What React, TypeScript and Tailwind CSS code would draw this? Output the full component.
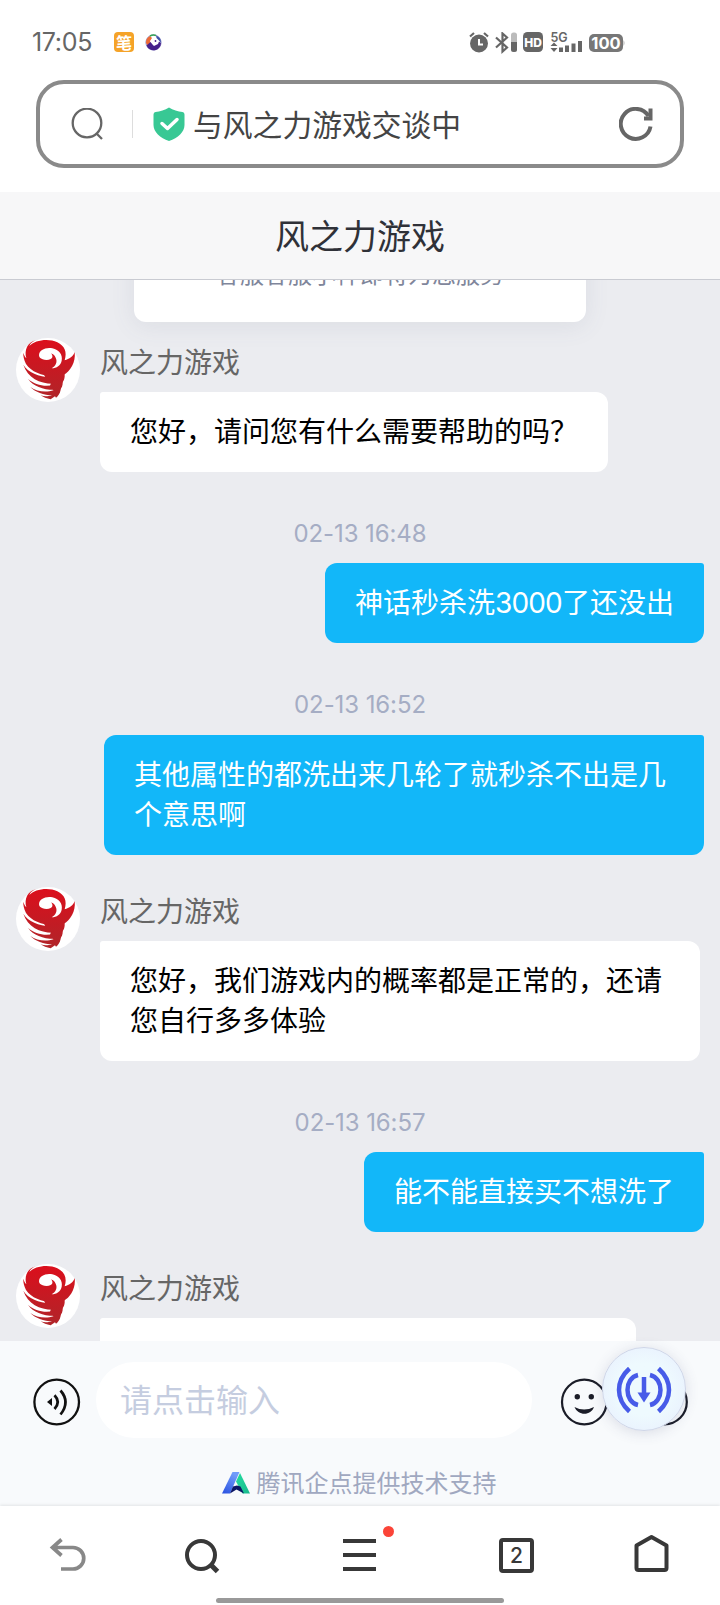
import React from "react";

const SANS = "font-['Noto_Sans_CJK_SC',sans-serif]";

function Avatar() {
  return (
    <svg className="size-16 shrink-0" viewBox="6 6 192 192">
      <defs>
        <linearGradient id="tornado" gradientUnits="userSpaceOnUse" x1="100" y1="10" x2="100" y2="190">
          <stop offset="0" stopColor="#dc0e1c" />
          <stop offset="1" stopColor="#b02529" />
        </linearGradient>
      </defs>
      <circle cx="102" cy="102" r="96" fill="#fff" />
      <g fill="url(#tornado)">
        <path d="M68 12C56 16 49 22 46 30C62 12 104 6 130 19C152 30 160 48 152 73C166 69 178 61 182 48C186 80 168 106 150 116C104 127 56 114 36 84C30 71 27 60 28 50C30 58 33 63 37 67C30 42 40 18 68 12Z" />
        <path d="M28 86C42 110 78 124 112 123L152 114C153 126 150 134 145 139C100 151 44 136 28 86Z" />
        <path d="M42 128C62 148 96 153 120 146L146 136C147 149 143 157 138 160C100 165 60 155 42 128Z" />
        <path d="M49 153C68 168 98 170 118 163L141 154C140 168 136 174 131 177C98 181 66 171 49 153Z" />
        <path d="M80 178C96 184 110 182 138 166C136 176 131 182 126 185L123 181L110 190C98 188 88 184 80 178Z" />
        <path d="M86 108L151 108L146 137L138 160L130 178L108 150L112 137L96 128Z" />
      </g>
      <path
        fill="#fff"
        d="M75 58C75 42 95 33 115 37C135 41 147 57 143 74C140 89 128 96 113 97C126 89 131 77 125 65C122 58 117 54 111 52C117 59 117 66 110 69C103 73 92 72 86 70C79 68 75 64 75 58Z"
      />
    </svg>
  );
}

type IncomingProps = { children?: React.ReactNode; className?: string };

function Incoming({ children, className = "" }: IncomingProps) {
  return (
    <div className={`flex shrink-0 items-start gap-5 pl-4 ${className}`}>
      <Avatar />
      <div className="flex flex-col items-start">
        <div className="flex h-[54px] items-start pt-[3px] text-[28px] leading-10 text-[#666]">风之力游戏</div>
        <div className="min-h-20 max-w-[600px] rounded-[12px] rounded-tl-[3px] bg-white px-[30px] pt-[18px] pb-[22px] text-[28px] leading-10 text-black">
          {children}
        </div>
      </div>
    </div>
  );
}

function Outgoing({ children }: { children: React.ReactNode }) {
  return (
    <div className="flex shrink-0 justify-end pr-4">
      <div className="max-w-[600px] rounded-[12px] rounded-tr-[3px] bg-[#12b7f9] px-[30px] pt-[18px] pb-[22px] text-[28px] leading-10 text-white">
        {children}
      </div>
    </div>
  );
}

function Time({ children, className }: { children: string; className: string }) {
  return (
    <div className={`mt-8 flex shrink-0 items-center justify-center font-['Inter'] text-[24px] tracking-[-0.1px] text-[#a5adc4] ${className}`}>
      {children}
    </div>
  );
}

function StatusBar() {
  return (
    <div className="flex h-20 shrink-0 items-start pt-8 pl-8">
      <div className="flex h-[22px] w-[82px] items-center font-['Inter'] text-[25px] tracking-[-0.3px] text-[#666]">17:05</div>
      <div className="flex size-5 items-center justify-center rounded-[4px] bg-[#f5a328] text-[16px] leading-5 font-bold text-white">笔</div>
      <svg className="mt-[2px] ml-[11px] size-[17px]" viewBox="0 0 17 17">
        <circle cx="8.5" cy="8.5" r="7.6" fill="#fff" stroke="#8a86c4" strokeWidth="1" />
        <path d="M1 9A7.500 7.500 0 0 1 5 2L7 4L5 7L5.500 9L3 12Z" fill="#ed6a35" />
        <path d="M5 2A7.500 7.500 0 0 1 11 1.500" stroke="#35a557" strokeWidth="1.600" fill="none" />
        <path d="M1.500 11.500L5.500 8L7.500 10.500L9 12L13 10L14 7.500L16 9A7.500 7.500 0 0 1 1.500 11.500Z" fill="#46208b" />
        <path d="M11 1.500A7.500 7.500 0 0 1 16 9L14 6.500L11.500 4Z" fill="#3c50a8" />
        <circle cx="10.500" cy="7" r="0.900" fill="#46208b" />
      </svg>
      <svg className="ml-[307px] h-[22px] w-[157px]" viewBox="0 0 157 22" fill="#666">
        <circle cx="10" cy="11.500" r="9" />
        <path d="M1 4.500L5 1M15 1L19 4.500" stroke="#666" strokeWidth="2.200" />
        <path d="M10 7V12.500H14" stroke="#fff" strokeWidth="2" fill="none" />
        <path d="M27 5.500L38 15.500L33.500 19.500V1.500L38 5.500L27 15.500" stroke="#666" strokeWidth="2.200" fill="none" />
        <rect x="42" y="0.500" width="6" height="19.500" rx="2.500" fill="#bbb" />
        <path d="M42 10H48V17.500Q48 20 45 20T42 17.500Z" />
        <rect x="54" y="0" width="20" height="20" rx="4.500" />
        <text x="64" y="14.500" textAnchor="middle" fill="#fff" className="font-['Inter'] text-[12px] font-extrabold">HD</text>
        <text x="81.500" y="9.800" className="font-['Inter'] text-[12.500px] font-semibold">5G</text>
        <path d="M85 10.500L88.500 14H81.500ZM85 20L81.500 16H88.500Z" />
        <path d="M90 15.500h4v4.500h-4zM96 13.500h4v6.500h-4zM102.500 11.500h4v8.500h-4zM109 9h4v11h-4z" />
        <rect x="120" y="2" width="34" height="18" rx="5" fill="#777" />
        <path d="M154.500 8Q156.500 11 154.500 14Z" fill="#aaa" />
        <text x="137" y="17" textAnchor="middle" fill="#fff" className="font-['Inter'] text-[16.500px] font-bold">100</text>
      </svg>
    </div>
  );
}

function AddressBar() {
  return (
    <div className="mx-9 flex h-22 shrink-0 items-center rounded-[28px] border-4 border-[#8a8a8a] bg-white pl-[31px]">
      <svg className="size-8 shrink-0" viewBox="0 0 32 32" fill="none" stroke="#666" strokeWidth="2.300">
        <circle cx="16" cy="15" r="14.300" />
        <path d="M25.500 25.500L31 31" />
      </svg>
      <div className="ml-[29px] h-7 w-px bg-[#ddd]" />
      <svg className="ml-5 h-[34px] w-[32px] shrink-0" viewBox="0 0 32 34">
        <path d="M16 0.500C20 3 25 4.500 29.500 5Q31.500 5.300 31.500 7.500V18C31.500 25 25 31 16 34C7 31 0.500 25 0.500 18V7.500Q0.500 5.300 2.500 5C7 4.500 12 3 16 0.500Z" fill="#38c894" />
        <path d="M9 16.500L14.500 21.500L24 12.500" fill="none" stroke="#fff" strokeWidth="3.500" strokeLinecap="round" strokeLinejoin="round" />
      </svg>
      <div className="ml-2 pb-[2px] text-[29.800px] leading-10 text-[#444]">与风之力游戏交谈中</div>
      <svg className="mr-[27px] ml-auto size-[34px]" viewBox="0 0 34 34" fill="none" stroke="#666" strokeWidth="4">
        <path d="M31.500 19.500A15 15 0 1 1 29.500 9" />
        <path d="M31.500 1.500V11.500H25" />
      </svg>
    </div>
  );
}

function InputArea() {
  return (
    <div className="relative z-10 flex h-[165px] shrink-0 flex-col bg-[#f8fafc]">
      <div className="flex h-[97px] items-start pt-[21px] pl-[33px]">
        <svg className="mt-4 size-12" viewBox="0 0 48 48" fill="none" stroke="#111" strokeWidth="2.300">
          <circle cx="23.700" cy="24" r="22.300" />
          <path d="M14 24L19 20V28Z" fill="#111" stroke="none" />
          <path d="M21.500 17.300Q28 24 21.500 31M27.500 12.500Q37.500 24 27.500 36.500" strokeWidth="2.700" />
        </svg>
        <div className="ml-[15px] flex h-19 w-[436px] items-center rounded-full bg-white pb-1 pl-6 text-[32px] leading-10 text-[#c5cde0]">请点击输入</div>
        <svg className="mt-4 ml-7 size-12" viewBox="0 0 48 48" fill="none" stroke="#1b1d28" strokeWidth="2.200">
          <circle cx="24.300" cy="24" r="22.300" />
          <circle cx="17.300" cy="18.700" r="2.700" fill="#1b1d28" stroke="none" />
          <circle cx="31.300" cy="18.700" r="2.700" fill="#1b1d28" stroke="none" />
          <path d="M14.500 29Q24 34 34 29C31 38 18 38 14.500 29Z" fill="#1b1d28" stroke="none" />
        </svg>
        <svg className="mt-4 ml-8 size-12" viewBox="0 0 48 48" fill="none" stroke="#1b1d28" strokeWidth="2.200">
          <circle cx="24.500" cy="24" r="22.300" />
        </svg>
      </div>
      <div className="flex items-center justify-center pt-[26px] pr-[2px] text-[24px] leading-9 text-[#a0a8c0]">
        <svg className="mt-[2px] mr-[7px] h-[22px] w-7" viewBox="0 0 28 22">
          <defs>
            <linearGradient id="qdBlue" x1="0" y1="1" x2=".5" y2="0">
              <stop offset="0" stopColor="#2850e0" />
              <stop offset="1" stopColor="#719cfa" />
            </linearGradient>
            <linearGradient id="qdGreen" x1="0" y1="0" x2="1" y2="1">
              <stop offset="0" stopColor="#24dca0" />
              <stop offset="1" stopColor="#18b98c" />
            </linearGradient>
          </defs>
          <path d="M10.500 0H17.500L8 21.500H0Z" fill="url(#qdBlue)" />
          <path d="M18 1L28 21.500H20.500L14 9.500Z" fill="url(#qdGreen)" />
          <path d="M8 21.500L11 14.500L15 13.500L18.500 14.500L22 21.500L14.500 17.500Z" fill="#0d1765" />
        </svg>
        腾讯企点提供技术支持
      </div>
      <div className="absolute top-[6px] left-[602px] flex size-[84px] items-center justify-center rounded-full border border-[#cfd6e8] bg-radial from-[#eefafe] from-45% to-[#e6ecfd] shadow-[0_2px_14px_rgba(60,70,110,0.16)]">
        <svg className="size-[60px]" viewBox="0 0 60 60" fill="none" stroke="#475be8" strokeWidth="4.500">
          <path d="M15.500 9.500C1.500 22 1.500 40 15.500 52.500M44.500 9.500C58.500 22 58.500 40 44.500 52.500" />
          <path d="M24 16C10 19 10 43 24 46M36 16C50 19 50 43 36 46" />
          <path d="M30 18V36" />
          <path d="M23.500 33.500H36.500L30 43.500Z" fill="#475be8" stroke="none" />
        </svg>
      </div>
    </div>
  );
}

function BrowserNav() {
  return (
    <div className="relative z-20 flex h-[99px] shrink-0 flex-col bg-white shadow-[0_-1px_3px_rgba(0,0,0,0.09)]">
      <div className="flex h-[92px] items-start pt-[28px] pl-[49px] text-[#383838]">
        <svg className="mt-1 h-[34px] w-[38px]" viewBox="0 0 38 34" fill="none" stroke="#888" strokeWidth="3.700">
          <path d="M12.500 1.500L3.500 9.500L12.500 17.500M3.500 9.500H24A10.500 10.500 0 0 1 24 31H12" />
        </svg>
        <svg className="mt-1 ml-[97px] size-9" viewBox="0 0 36 36" fill="none" stroke="currentColor" strokeWidth="4">
          <circle cx="17" cy="17" r="14" />
          <path d="M27 27L33.500 33.500" strokeWidth="5" />
        </svg>
        <div className="relative mt-[5px] ml-[123px] flex h-[32px] w-[33px] flex-col justify-between">
          <span className="h-1 w-full bg-[#383838]" />
          <span className="h-1 w-full bg-[#383838]" />
          <span className="h-1 w-full bg-[#383838]" />
          <span className="absolute -top-[13px] left-[40px] size-[11px] rounded-full bg-[#fb4438]" />
        </div>
        <div className="mt-1 ml-[123px] flex size-[35px] items-center justify-center rounded-[4px] border-4 border-[#383838] font-['Inter'] text-[21px] font-medium">2</div>
        <svg className="ml-[99px] h-[38px] w-[37px]" viewBox="0 0 37 38" fill="none" stroke="currentColor" strokeWidth="4" strokeLinejoin="round">
          <path d="M3.500 11.500L18.500 3L33.500 11.500V34Q33.500 36 31.500 36H5.500Q3.500 36 3.500 34Z" />
        </svg>
      </div>
      <div className="mx-auto h-[5px] w-72 rounded-full bg-[#999]" />
    </div>
  );
}

export default function App() {
  return (
    <div className={`flex h-[1605px] w-[720px] flex-col overflow-hidden bg-white ${SANS}`}>
      <StatusBar />
      <AddressBar />
      <header className="mt-6 flex h-22 shrink-0 items-center justify-center border-b border-[#c9cbd2] bg-[#f7f7f8] pb-[3px] text-[34px] text-[#2f3138]">
        风之力游戏
      </header>
      <main className="flex h-[1061px] shrink-0 flex-col overflow-hidden bg-[#ebecf0]">
        <div className="-mt-[60px] ml-[134px] flex h-[102px] w-[452px] shrink-0 items-start justify-center rounded-[12px] bg-white pt-[35px] text-[24px] leading-9 text-[#7f869b] shadow-[0_4px_24px_rgba(90,95,130,0.10)]">
          客服客服小样即将为您服务
        </div>
        <Incoming className="mt-4">您好，请问您有什么需要帮助的吗？</Incoming>
        <Time className="h-[59px]">02-13 16:48</Time>
        <Outgoing>
          神话秒杀洗<span className="font-['Inter'] leading-none tracking-[-0.800px]">3000</span>了还没出
        </Outgoing>
        <Time className="h-[60px]">02-13 16:52</Time>
        <Outgoing>其他属性的都洗出来几轮了就秒杀不出是几个意思啊</Outgoing>
        <Incoming className="mt-8">您好，我们游戏内的概率都是正常的，还请您自行多多体验</Incoming>
        <Time className="h-[59px]">02-13 16:57</Time>
        <Outgoing>能不能直接买不想洗了</Outgoing>
        <Incoming className="mt-8">
          <div className="w-[476px]" />
        </Incoming>
      </main>
      <InputArea />
      <BrowserNav />
    </div>
  );
}
